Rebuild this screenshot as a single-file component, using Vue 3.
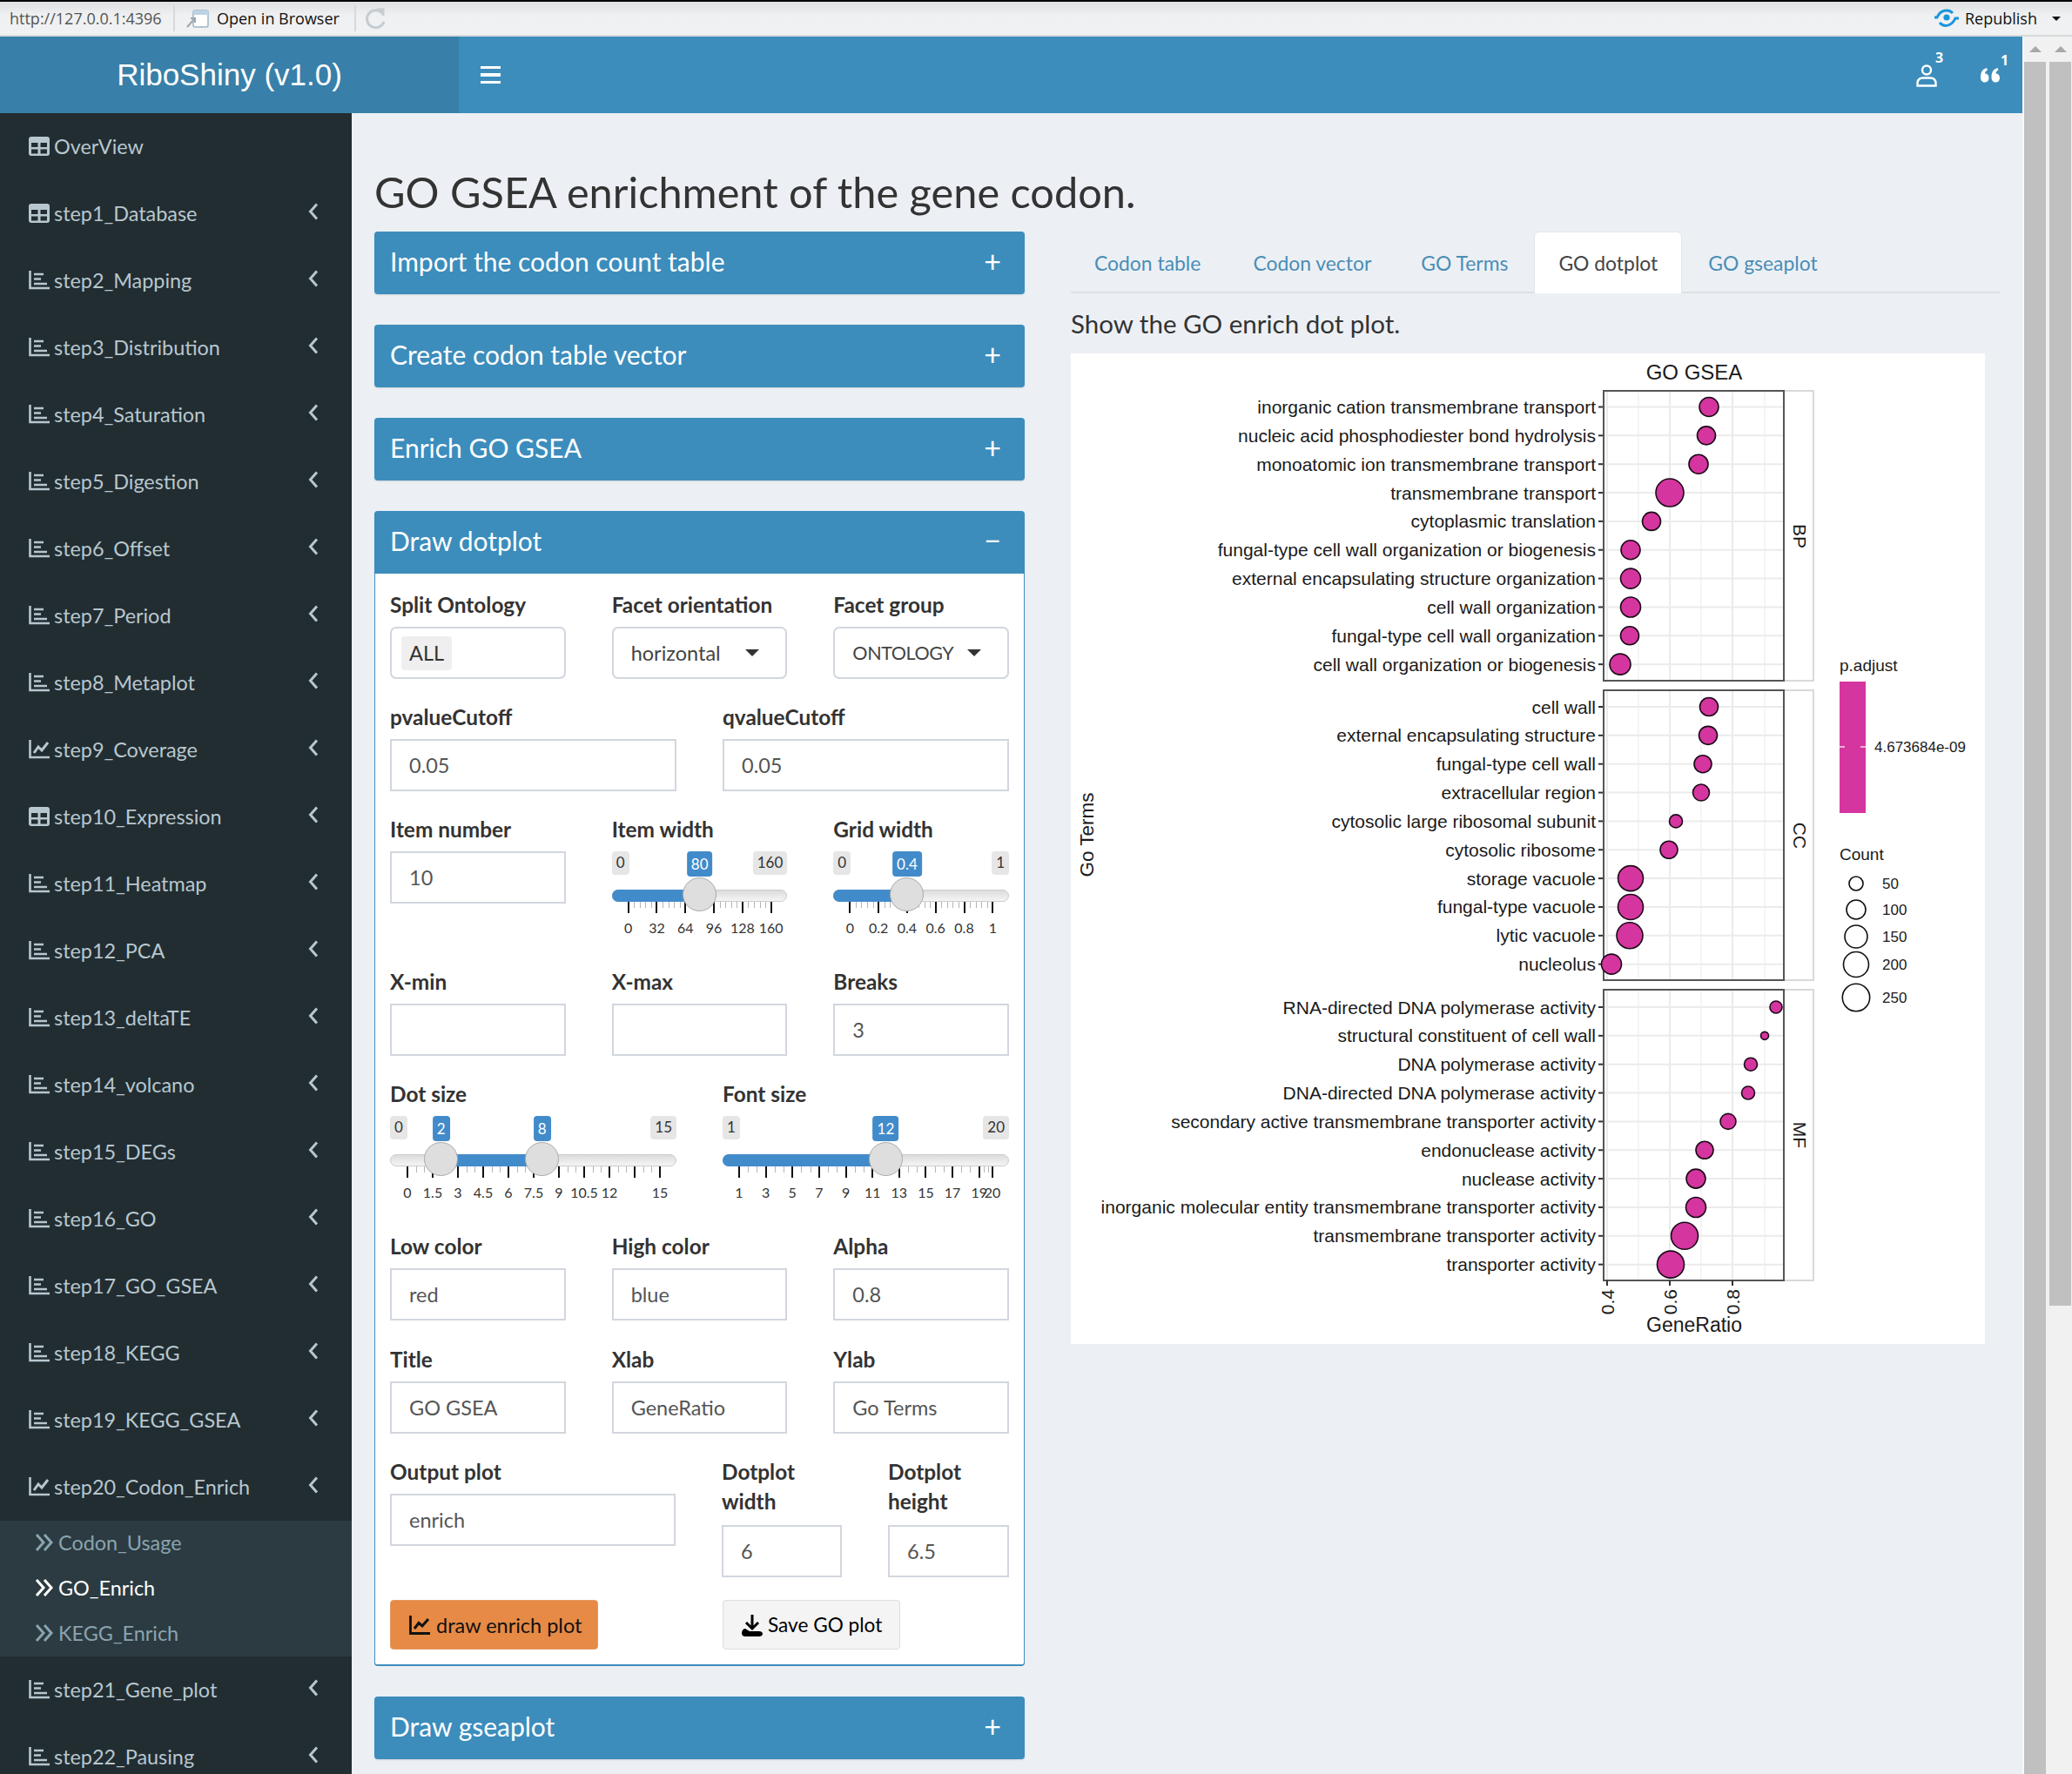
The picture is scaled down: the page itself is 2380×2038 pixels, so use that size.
<script setup>
const navTop = [
  ['OverView', 'table', false],
  ['step1_Database', 'table', true],
  ['step2_Mapping', 'bar', true],
  ['step3_Distribution', 'bar', true],
  ['step4_Saturation', 'bar', true],
  ['step5_Digestion', 'bar', true],
  ['step6_Offset', 'bar', true],
  ['step7_Period', 'bar', true],
  ['step8_Metaplot', 'bar', true],
  ['step9_Coverage', 'line', true],
  ['step10_Expression', 'table', true],
  ['step11_Heatmap', 'bar', true],
  ['step12_PCA', 'bar', true],
  ['step13_deltaTE', 'bar', true],
  ['step14_volcano', 'bar', true],
  ['step15_DEGs', 'bar', true],
  ['step16_GO', 'bar', true],
  ['step17_GO_GSEA', 'bar', true],
  ['step18_KEGG', 'bar', true],
  ['step19_KEGG_GSEA', 'bar', true],
  ['step20_Codon_Enrich', 'line', true]
]
const navBottom = [
  ['step21_Gene_plot', 'bar', true],
  ['step22_Pausing', 'bar', true]
]
const subNav = [
  ['Codon_Usage', false],
  ['GO_Enrich', true],
  ['KEGG_Enrich', false]
]

const tabs = ['Codon table', 'Codon vector', 'GO Terms', 'GO dotplot', 'GO gseaplot']

function evenTicks(min, step, count) {
  return Array.from({ length: count }, (_, i) => {
    const v = +(min + step * i).toFixed(2)
    return { v, label: String(v) }
  })
}

function makeSlider(width, lead, tail, min, max, values, ticks, minors) {
  const span = width - lead - tail
  const pos = (v) => lead + ((v - min) / (max - min)) * span
  const minorTicks = []
  for (let i = 0; i < ticks.length - 1; i++) {
    for (let m = 1; m <= minors; m++) {
      minorTicks.push(pos(ticks[i].v + ((ticks[i + 1].v - ticks[i].v) * m) / (minors + 1)))
    }
  }
  return {
    width,
    min,
    max,
    values,
    single: values.length === 1,
    handles: values.map(pos),
    fillLeft: values.length > 1 ? pos(values[0]) : 0,
    fillWidth: values.length > 1 ? pos(values[1]) - pos(values[0]) : pos(values[0]),
    ticks: ticks.map((t) => ({ ...t, x: pos(t.v) })),
    minorTicks
  }
}

const itemWidth = makeSlider(201, 19, 18, 0, 160, [80], evenTicks(0, 32, 6), 4)
const gridWidth = makeSlider(201, 19, 18, 0, 1, [0.4], evenTicks(0, 0.2, 6), 4)
const dotTicks = evenTicks(0, 1.5, 11).map((t) => (t.v === 13.5 ? { ...t, label: '' } : t))
const dotSize = makeSlider(329, 20, 19, 0, 15, [2, 8], dotTicks, 2)
const fontTicks = [...evenTicks(1, 2, 10), { v: 20, label: '20' }]
const fontSize = makeSlider(329, 19, 19, 1, 20, [12], fontTicks, 2)

const panels = [
  {
    name: 'BP', top: 449, bottom: 782, first: 467.5, strip: 616,
    rows: [
      ['inorganic cation transmembrane transport', 1963, 22],
      ['nucleic acid phosphodiester bond hydrolysis', 1960, 21],
      ['monoatomic ion transmembrane transport', 1951, 22],
      ['transmembrane transport', 1918, 32],
      ['cytoplasmic translation', 1897, 21],
      ['fungal-type cell wall organization or biogenesis', 1873, 22],
      ['external encapsulating structure organization', 1873, 23],
      ['cell wall organization', 1873, 23],
      ['fungal-type cell wall organization', 1872, 21],
      ['cell wall organization or biogenesis', 1861, 24]
    ]
  },
  {
    name: 'CC', top: 793, bottom: 1126, first: 812, strip: 960,
    rows: [
      ['cell wall', 1963, 21],
      ['external encapsulating structure', 1962, 21],
      ['fungal-type cell wall', 1956, 20],
      ['extracellular region', 1954, 19],
      ['cytosolic large ribosomal subunit', 1925, 15],
      ['cytosolic ribosome', 1917, 20],
      ['storage vacuole', 1873, 29],
      ['fungal-type vacuole', 1873, 29],
      ['lytic vacuole', 1872, 30],
      ['nucleolus', 1851, 23]
    ]
  },
  {
    name: 'MF', top: 1137, bottom: 1471, first: 1157, strip: 1304,
    rows: [
      ['RNA-directed DNA polymerase activity', 2040, 14],
      ['structural constituent of cell wall', 2027, 9],
      ['DNA polymerase activity', 2011, 15],
      ['DNA-directed DNA polymerase activity', 2008, 15],
      ['secondary active transmembrane transporter activity', 1985, 18],
      ['endonuclease activity', 1958, 20],
      ['nuclease activity', 1948, 22],
      ['inorganic molecular entity transmembrane transporter activity', 1948, 23],
      ['transmembrane transporter activity', 1935, 31],
      ['transporter activity', 1919, 31]
    ]
  }
]
const gridMajor = [1846, 1918, 1990]
const gridMinor = [1882, 1954, 2027]
const countLegend = [
  [50, 1015, 8],
  [100, 1045, 11],
  [150, 1076, 13],
  [200, 1108, 14.5],
  [250, 1146, 15.7]
]
</script>

<template>
  <div class="page">
    <div class="topbar">
      <span class="url">http://127.0.0.1:4396</span>
      <span class="sep"></span>
      <svg class="open-icon" width="26" height="24" viewBox="0 0 26 24">
        <rect x="8" y="3" width="17" height="19" rx="2" fill="#fff" stroke="#9fb2c4" stroke-width="1.5" />
        <rect x="8" y="3" width="17" height="5" fill="#bcd2e6" />
        <path d="M1 22 L9 13 M5 12 H10 V17" fill="none" stroke="#9aa7b2" stroke-width="2" />
      </svg>
      <span class="open-text">Open in Browser</span>
      <span class="sep sep2"></span>
      <svg class="reload" width="26" height="26" viewBox="0 0 26 26">
        <path d="M20 7 A10 10 0 1 0 22 17 M14 3 H21 V10" fill="none" stroke="#c5ccd2" stroke-width="3" />
      </svg>
      <span class="spacer"></span>
      <svg class="pub-icon" width="30" height="24" viewBox="0 0 30 24">
        <circle cx="15" cy="11" r="3.6" fill="#1a95dd" />
        <path d="M1 11 H4 C8 2 17 1 22 6 M29 12 H25 C21 21 12 23 7 17" fill="none" stroke="#1a95dd" stroke-width="3" />
      </svg>
      <span class="pub-text">Republish</span>
      <span class="pub-caret"></span>
    </div>

    <div class="stage">
      <div class="app">
        <header class="head">
          <div class="logo">RiboShiny (v1.0)</div>
          <div class="burger"><i></i><i></i><i></i></div>
          <span class="spacer"></span>
          <div class="head-icon user">
            <svg width="24" height="27" viewBox="0 0 24 27">
              <circle cx="12" cy="7.5" r="5" fill="none" stroke="#fff" stroke-width="2.4" />
              <path d="M1.5 25.5 V23 C1.5 19 4 16.5 8 16.5 H16 C20 16.5 22.5 19 22.5 23 V25.5 Z" fill="none" stroke="#fff" stroke-width="2.4" />
            </svg>
            <b>3</b>
          </div>
          <div class="head-icon quote">
            <svg width="24" height="17" viewBox="0 0 24 17">
              <path d="M1 11 C1 5 3 1.5 8 0 L9 2.5 C7 3.5 6 5 6 6.5 C9 6.5 10.5 8.5 10.5 11.5 C10.5 14.5 8.5 16.5 5.8 16.5 C3 16.5 1 14.5 1 11 Z" fill="#fff" />
              <path d="M13.5 11 C13.5 5 15.5 1.5 20.5 0 L21.5 2.5 C19.5 3.5 18.5 5 18.5 6.5 C21.5 6.5 23 8.5 23 11.5 C23 14.5 21 16.5 18.3 16.5 C15.5 16.5 13.5 14.5 13.5 11 Z" fill="#fff" />
            </svg>
            <b>1</b>
          </div>
        </header>

        <div class="below">
          <aside class="side">
            <template v-for="n in navTop" :key="n[0]">
              <div class="nav">
                <svg v-if="n[1] === 'table'" class="nav-icon" viewBox="0 0 24 22">
                  <path d="M3 0 H21 A3 3 0 0 1 24 3 V19 A3 3 0 0 1 21 22 H3 A3 3 0 0 1 0 19 V3 A3 3 0 0 1 3 0 Z M3 7 V12 H10.5 V7 Z M13.5 7 V12 H21 V7 Z M3 14.5 V19.5 H10.5 V14.5 Z M13.5 14.5 V19.5 H21 V14.5 Z" fill="#b8c7ce" fill-rule="evenodd" />
                </svg>
                <svg v-else-if="n[1] === 'bar'" class="nav-icon" viewBox="0 0 24 22">
                  <path d="M1.5 0 V20 H24" fill="none" stroke="#b8c7ce" stroke-width="2.6" />
                  <path d="M6 4 H17 M6 9.5 H14 M6 15 H21" fill="none" stroke="#b8c7ce" stroke-width="2.6" />
                </svg>
                <svg v-else class="nav-icon" viewBox="0 0 24 22">
                  <path d="M1.5 0 V20 H24" fill="none" stroke="#b8c7ce" stroke-width="2.6" />
                  <path d="M6 15 L11 8 L15 12 L22 3" fill="none" stroke="#b8c7ce" stroke-width="3" />
                </svg>
                <span>{{ n[0] }}</span>
                <svg v-if="n[2]" class="chev" width="12" height="20" viewBox="0 0 12 20">
                  <path d="M10 1.5 L2.5 10 L10 18.5" fill="none" stroke="#b8c7ce" stroke-width="3" />
                </svg>
              </div>
            </template>
            <div class="subnav">
              <div v-for="s in subNav" :key="s[0]" class="sub" :class="{ on: s[1] }">
                <svg width="22" height="22" viewBox="0 0 22 22">
                  <path d="M2 2 L10 11 L2 20 M11 2 L19 11 L11 20" fill="none" stroke="currentColor" stroke-width="3" />
                </svg>
                <span>{{ s[0] }}</span>
              </div>
            </div>
            <div v-for="n in navBottom" :key="n[0]" class="nav">
              <svg class="nav-icon" viewBox="0 0 24 22">
                <path d="M1.5 0 V20 H24" fill="none" stroke="#b8c7ce" stroke-width="2.6" />
                <path d="M6 4 H17 M6 9.5 H14 M6 15 H21" fill="none" stroke="#b8c7ce" stroke-width="2.6" />
              </svg>
              <span>{{ n[0] }}</span>
              <svg class="chev" width="12" height="20" viewBox="0 0 12 20">
                <path d="M10 1.5 L2.5 10 L10 18.5" fill="none" stroke="#b8c7ce" stroke-width="3" />
              </svg>
            </div>
          </aside>

          <main class="main">
            <h1 class="title">GO GSEA enrichment of the gene codon.</h1>
            <div class="cols">
              <section class="left">
                <div class="box-head"><span>Import the codon count table</span><span class="pm">+</span></div>
                <div class="box-head"><span>Create codon table vector</span><span class="pm">+</span></div>
                <div class="box-head"><span>Enrich GO GSEA</span><span class="pm">+</span></div>

                <div class="box-open">
                  <div class="box-head"><span>Draw dotplot</span><span class="pm minus">−</span></div>
                  <div class="form">
                    <div class="row r3">
                      <div class="field">
                        <label>Split Ontology</label>
                        <div class="ctl round"><span class="chip">ALL</span></div>
                      </div>
                      <div class="field">
                        <label>Facet orientation</label>
                        <div class="ctl round pick">horizontal<i class="caret"></i></div>
                      </div>
                      <div class="field">
                        <label>Facet group</label>
                        <div class="ctl round pick group">ONTOLOGY<i class="caret"></i></div>
                      </div>
                    </div>

                    <div class="row r2">
                      <div class="field"><label>pvalueCutoff</label><div class="ctl">0.05</div></div>
                      <div class="field"><label>qvalueCutoff</label><div class="ctl">0.05</div></div>
                    </div>

                    <div class="row r3">
                      <div class="field"><label>Item number</label><div class="ctl">10</div></div>
                      <div class="field" v-for="sl in [['Item width', itemWidth], ['Grid width', gridWidth]]" :key="sl[0]">
                        <label>{{ sl[0] }}</label>
                        <div class="slider">
                          <span class="end lo">{{ sl[1].min }}</span>
                          <span class="end hi">{{ sl[1].max }}</span>
                          <div class="track"></div>
                          <div class="fill" :class="{ start: sl[1].single }" :style="{ left: sl[1].fillLeft + 'px', width: sl[1].fillWidth + 'px' }"></div>
                          <i v-for="m in sl[1].minorTicks" :key="m" class="minor" :style="{ left: m + 'px' }"></i>
                          <template v-for="t in sl[1].ticks" :key="t.v">
                            <i class="major" :style="{ left: t.x + 'px' }"></i>
                            <span class="tick" :style="{ left: t.x + 'px' }">{{ t.label }}</span>
                          </template>
                          <template v-for="(h, i) in sl[1].handles" :key="i">
                            <span class="val" :style="{ left: h + 'px' }">{{ sl[1].values[i] }}</span>
                            <span class="knob" :style="{ left: h + 'px' }"></span>
                          </template>
                        </div>
                      </div>
                    </div>

                    <div class="row r3">
                      <div class="field"><label>X-min</label><div class="ctl"></div></div>
                      <div class="field"><label>X-max</label><div class="ctl"></div></div>
                      <div class="field"><label>Breaks</label><div class="ctl">3</div></div>
                    </div>

                    <div class="row r2">
                      <div class="field" v-for="sl in [['Dot size', dotSize], ['Font size', fontSize]]" :key="sl[0]">
                        <label>{{ sl[0] }}</label>
                        <div class="slider">
                          <span class="end lo">{{ sl[1].min }}</span>
                          <span class="end hi">{{ sl[1].max }}</span>
                          <div class="track"></div>
                          <div class="fill" :class="{ start: sl[1].single }" :style="{ left: sl[1].fillLeft + 'px', width: sl[1].fillWidth + 'px' }"></div>
                          <i v-for="m in sl[1].minorTicks" :key="m" class="minor" :style="{ left: m + 'px' }"></i>
                          <template v-for="t in sl[1].ticks" :key="t.v">
                            <i class="major" :style="{ left: t.x + 'px' }"></i>
                            <span class="tick" :style="{ left: t.x + 'px' }">{{ t.label }}</span>
                          </template>
                          <template v-for="(h, i) in sl[1].handles" :key="i">
                            <span class="val" :style="{ left: h + 'px' }">{{ sl[1].values[i] }}</span>
                            <span class="knob" :style="{ left: h + 'px' }"></span>
                          </template>
                        </div>
                      </div>
                    </div>

                    <div class="row r3">
                      <div class="field"><label>Low color</label><div class="ctl">red</div></div>
                      <div class="field"><label>High color</label><div class="ctl">blue</div></div>
                      <div class="field"><label>Alpha</label><div class="ctl">0.8</div></div>
                    </div>

                    <div class="row r3 nudge">
                      <div class="field"><label>Title</label><div class="ctl">GO GSEA</div></div>
                      <div class="field"><label>Xlab</label><div class="ctl">GeneRatio</div></div>
                      <div class="field"><label>Ylab</label><div class="ctl">Go Terms</div></div>
                    </div>

                    <div class="row r2">
                      <div class="field"><label>Output plot</label><div class="ctl">enrich</div></div>
                      <div class="row pair">
                        <div class="field"><label>Dotplot<br />width</label><div class="ctl">6</div></div>
                        <div class="field"><label>Dotplot<br />height</label><div class="ctl">6.5</div></div>
                      </div>
                    </div>

                    <div class="row r2 actions">
                      <div>
                        <button class="btn draw">
                          <svg width="24" height="24" viewBox="0 0 24 24">
                            <path d="M1.5 1 V21.5 H24" fill="none" stroke="#111" stroke-width="2.8" />
                            <path d="M6 16 L11 9.5 L15 13 L22 5" fill="none" stroke="#111" stroke-width="3" />
                          </svg>
                          <span>draw enrich plot</span>
                        </button>
                      </div>
                      <div>
                        <button class="btn save">
                          <svg width="24" height="26" viewBox="0 0 24 26">
                            <path d="M12 1 V15 M5 10 L12 17 L19 10" fill="none" stroke="#000" stroke-width="3" />
                            <path d="M0 22 C0 19 2 17 4 17 L9 20 H20 C22 20 24 21 24 23 C24 25 22 26 20 26 H4 C2 26 0 25 0 22 Z" fill="#000" />
                          </svg>
                          <span>Save GO plot</span>
                        </button>
                      </div>
                    </div>
                  </div>
                </div>

                <div class="box-head"><span>Draw gseaplot</span><span class="pm">+</span></div>
              </section>

              <section class="right">
                <div class="tabs">
                  <div v-for="t in tabs" :key="t" class="tab" :class="{ active: t === 'GO dotplot' }">{{ t }}</div>
                </div>
                <h4 class="show">Show the GO enrich dot plot.</h4>
                <svg class="plot" width="1050" height="1138" viewBox="1230 406 1050 1138">
                  <text x="1946" y="427" class="t" font-size="24" text-anchor="middle" dominant-baseline="central">GO GSEA</text>
                  <text class="t" font-size="22.5" text-anchor="middle" dominant-baseline="central" transform="translate(1248 959) rotate(-90)">Go Terms</text>

                  <g v-for="p in panels" :key="p.name">
                    <rect x="2049" :y="p.top" width="34" :height="p.bottom - p.top" fill="#fff" stroke="#d9d9d9" stroke-width="2" />
                    <line v-for="g in gridMinor" :key="g" :x1="g" :x2="g" :y1="p.top" :y2="p.bottom" stroke="#f2f2f2" stroke-width="1.5" />
                    <line v-for="g in gridMajor" :key="g" :x1="g" :x2="g" :y1="p.top" :y2="p.bottom" stroke="#ebebeb" stroke-width="2" />
                    <g v-for="(r, i) in p.rows" :key="r[0]">
                      <line x1="1842" x2="2049" :y1="p.first + i * 32.85" :y2="p.first + i * 32.85" stroke="#ebebeb" stroke-width="2" />
                      <line x1="1836" x2="1842" :y1="p.first + i * 32.85" :y2="p.first + i * 32.85" stroke="#333" stroke-width="2" />
                      <text x="1833" :y="p.first + i * 32.85" class="t" font-size="21" text-anchor="end" dominant-baseline="central">{{ r[0] }}</text>
                    </g>
                    <rect x="1842" :y="p.top" width="207" :height="p.bottom - p.top" fill="none" stroke="#555" stroke-width="2" />
                    <text class="t" font-size="21" text-anchor="middle" dominant-baseline="central" :transform="`translate(2067 ${p.strip}) rotate(90)`">{{ p.name }}</text>
                    <circle v-for="(r, i) in p.rows" :key="r[0]" :cx="r[1]" :cy="p.first + i * 32.85" :r="r[2] / 2" fill="#d5359f" stroke="#1c0a18" stroke-width="1.6" />
                  </g>

                  <g v-for="(x, i) in gridMajor" :key="x">
                    <line :x1="x" :x2="x" y1="1471" y2="1477" stroke="#333" stroke-width="2" />
                    <text class="t" font-size="21" text-anchor="end" dominant-baseline="central" :transform="`translate(${x} 1481) rotate(-90)`">{{ ['0.4', '0.6', '0.8'][i] }}</text>
                  </g>
                  <text x="1946" y="1522" class="t" font-size="23" text-anchor="middle" dominant-baseline="central">GeneRatio</text>

                  <text x="2113" y="764" class="t" font-size="19" dominant-baseline="central">p.adjust</text>
                  <rect x="2113" y="783" width="30" height="151" fill="#d5359f" />
                  <path d="M2113 858 H2119 M2137 858 H2143" stroke="#f5d6ea" stroke-width="1.5" />
                  <text x="2153" y="858" class="t" font-size="17" dominant-baseline="central">4.673684e-09</text>

                  <text x="2113" y="981" class="t" font-size="19" dominant-baseline="central">Count</text>
                  <g v-for="c in countLegend" :key="c[0]">
                    <circle cx="2132" :cy="c[1]" :r="c[2]" fill="#fff" stroke="#111" stroke-width="1.6" />
                    <text x="2162" :y="c[1]" class="t" font-size="17" dominant-baseline="central">{{ c[0] }}</text>
                  </g>
                </svg>
              </section>
            </div>
          </main>
        </div>
      </div>

      <div class="scrolls">
        <div class="sb">
          <div class="arrow"></div>
          <div class="thumb long"></div>
        </div>
        <div class="sb">
          <div class="arrow"></div>
          <div class="thumb short"></div>
        </div>
      </div>
    </div>
  </div>
</template>

<style>
html, body {
  margin: 0;
  background: #ecf0f5;
}
</style>

<style scoped>
.page {
  width: 2380px;
  height: 2038px;
  overflow: hidden;
  display: flex;
  flex-direction: column;
  font-family: Lato, "Noto Sans", sans-serif;
  color: #333;
}

.topbar {
  height: 42px;
  flex: none;
  display: flex;
  align-items: center;
  box-sizing: border-box;
  border-top: 2px solid #000;
  border-bottom: 2px solid #d8dadc;
  background: linear-gradient(#dfe0e2, #eef0f1 40%, #f1f2f3);
  font-family: "Open Sans", sans-serif;
  padding-left: 11px;
  padding-right: 13px;
}
.url {
  width: 178px;
  color: #555;
  font-size: 18px;
  white-space: nowrap;
}
.sep {
  width: 2px;
  height: 30px;
  background: #d6d8da;
  margin-left: 10px;
}
.open-icon {
  margin-left: 13px;
}
.open-text {
  margin-left: 9px;
  color: #111;
  font-size: 18px;
  width: 141px;
  white-space: nowrap;
}
.sep2 {
  margin-left: 17px;
}
.reload {
  margin-left: 10px;
}
.spacer {
  flex: 1;
}
.pub-text {
  margin-left: 6px;
  color: #111;
  font-size: 18px;
}
.pub-caret {
  margin-left: 17px;
  border-left: 5px solid transparent;
  border-right: 5px solid transparent;
  border-top: 5px solid #111;
}

.stage {
  flex: 1;
  display: flex;
  min-height: 0;
}
.app {
  width: 2323px;
  flex: none;
  display: flex;
  flex-direction: column;
}

.head {
  height: 88px;
  flex: none;
  display: flex;
  align-items: center;
  background: #3c8dbc;
  color: #fff;
}
.logo {
  width: 527px;
  height: 100%;
  display: flex;
  align-items: center;
  justify-content: center;
  background: #3880a9;
  font-family: "Liberation Sans", sans-serif;
  font-size: 35px;
}
.burger {
  margin-left: 25px;
  width: 23px;
  display: flex;
  flex-direction: column;
  gap: 5px;
}
.burger i {
  display: block;
  height: 3.5px;
  background: #fff;
}
.head-icon {
  position: relative;
  display: flex;
}
.head-icon b {
  position: absolute;
  font-size: 16px;
  color: #fff;
  font-family: "Open Sans", sans-serif;
}
.user {
  margin-right: 49px;
}
.user b {
  left: 22px;
  top: -18px;
}
.quote {
  margin-right: 25px;
}
.quote b {
  left: 24px;
  top: -20px;
}

.below {
  flex: 1;
  display: flex;
  min-height: 0;
}
.side {
  width: 404px;
  flex: none;
  background: #222d32;
  color: #b8c7ce;
  font-size: 23.4px;
  overflow: hidden;
}
.nav {
  height: 77px;
  box-sizing: border-box;
  display: flex;
  align-items: center;
  padding: 0 38px 2px 33px;
}
.nav-icon {
  width: 24px;
  height: 22px;
  margin-right: 5px;
  flex: none;
}
.chev {
  margin-left: auto;
  margin-top: -3px;
}
.subnav {
  height: 156px;
  background: #2c3b41;
}
.sub {
  height: 52px;
  box-sizing: border-box;
  display: flex;
  align-items: center;
  padding: 0 0 2px 40px;
  gap: 5px;
  color: #8aa4af;
}
.sub.on {
  color: #fff;
}

.main {
  flex: 1;
  min-width: 0;
  background: #ecf0f5;
  padding: 60px 26px 0 26px;
}
.title {
  margin: 0 0 16px;
  height: 60px;
  line-height: 60px;
  font-size: 48.7px;
  font-weight: 400;
  color: #333;
  white-space: nowrap;
}
.cols {
  display: flex;
  gap: 53px;
}
.left {
  width: 747px;
  flex: none;
  display: flex;
  flex-direction: column;
  gap: 35px;
}
.right {
  flex: 1;
  min-width: 0;
}

.box-head {
  height: 72px;
  box-sizing: border-box;
  background: #3c8dbc;
  color: #fff;
  border-radius: 4px;
  display: flex;
  align-items: center;
  justify-content: space-between;
  padding: 0 27px 5px 18px;
  font-size: 30px;
  box-shadow: 0 1px 2px rgba(0, 0, 0, 0.12);
}
.pm {
  font-size: 34px;
  line-height: 1;
}
.box-open .box-head {
  border-radius: 4px 4px 0 0;
}
.form {
  box-sizing: border-box;
  height: 1255px;
  background: #fff;
  border: 1px solid #3c8dbc;
  border-top: 0;
  border-bottom-width: 2px;
  border-radius: 0 0 4px 4px;
  padding: 19px 17px 0;
  display: flex;
  flex-direction: column;
  gap: 27px;
}
.row {
  display: grid;
  column-gap: 53px;
}
.r3 {
  grid-template-columns: repeat(3, 1fr);
}
.r2 {
  grid-template-columns: repeat(2, 1fr);
}
.pair {
  grid-template-columns: 138px 139px;
}
.pair label {
  line-height: 34px;
  margin-bottom: 10px;
}
.nudge {
  margin-top: 1px;
}
.actions {
  margin-top: -1px;
}
.field {
  display: flex;
  flex-direction: column;
  min-width: 0;
}
label {
  display: block;
  font-weight: 700;
  font-size: 24.4px;
  line-height: 33px;
  margin-bottom: 9px;
  color: #333;
  white-space: nowrap;
}
.ctl {
  box-sizing: border-box;
  height: 60px;
  display: flex;
  align-items: center;
  border: 2px solid #d2d6de;
  padding-left: 20px;
  font-size: 23.5px;
  color: #555;
  background: #fff;
}
.round {
  border-radius: 7px;
  position: relative;
}
.pick {
  color: #444;
}
.group {
  font-size: 21.5px;
  letter-spacing: -0.4px;
}
.chip {
  margin-left: -9px;
  height: 39px;
  padding: 0 9px;
  display: flex;
  align-items: center;
  background: #efefef;
  border-radius: 4px;
  color: #333;
}
.caret {
  position: absolute;
  right: 30px;
  top: 24px;
  border-left: 8px solid transparent;
  border-right: 8px solid transparent;
  border-top: 8px solid #333;
}

.slider {
  position: relative;
  height: 106px;
  font-size: 17px;
}
.end,
.val {
  position: absolute;
  top: 0;
  height: 27px;
  line-height: 26px;
  padding: 0 5px;
  border-radius: 4px;
  background: #e6e6e6;
  color: #333;
}
.lo {
  left: 0;
}
.hi {
  right: 0;
}
.val {
  height: 29px;
  line-height: 29px;
  background: #428bca;
  color: #fff;
  transform: translateX(-50%);
}
.track {
  position: absolute;
  left: 0;
  right: 0;
  top: 44px;
  height: 14px;
  box-sizing: border-box;
  border: 1px solid #ccc;
  border-radius: 7px;
  background: linear-gradient(#dcdcdc, #f5f5f5);
}
.fill {
  position: absolute;
  top: 44px;
  height: 14px;
  background: #428bca;
}
.fill.start {
  border-radius: 7px 0 0 7px;
}
.knob {
  position: absolute;
  top: 30px;
  width: 39px;
  height: 39px;
  box-sizing: border-box;
  margin-left: -19.5px;
  border-radius: 50%;
  background: #dedede;
  border: 1px solid #aaa;
}
.major {
  position: absolute;
  top: 58px;
  width: 2px;
  height: 13px;
  margin-left: -1px;
  background: #111;
}
.minor {
  position: absolute;
  top: 58px;
  width: 1px;
  height: 7px;
  background: #b5b5b5;
}
.tick {
  position: absolute;
  top: 78px;
  line-height: 20px;
  font-size: 16px;
  color: #333;
  transform: translateX(-50%);
  white-space: nowrap;
}

.btn {
  height: 57px;
  box-sizing: border-box;
  display: inline-flex;
  align-items: center;
  gap: 7px;
  border-radius: 4px;
  font: inherit;
  font-size: 23.5px;
  white-space: nowrap;
  padding: 0 0 0 21px;
  color: #111;
}
.draw {
  width: 239px;
  background: #e68a45;
  border: 1px solid #e59a60;
}
.save {
  width: 204px;
  background: #f4f4f4;
  border: 1px solid #ddd;
  color: #000;
  gap: 6px;
  font-size: 22.6px;
}

.tabs {
  height: 71px;
  display: flex;
  box-sizing: border-box;
  border-bottom: 2px solid #dde1e6;
  gap: 3px;
}
.tab {
  height: 71px;
  box-sizing: border-box;
  padding: 0 27px;
  display: flex;
  align-items: center;
  font-size: 22.9px;
  color: #4b8db5;
  border-radius: 6px 6px 0 0;
}
.tab:first-child {
  margin-right: 3px;
}
.tab.active {
  background: #fff;
  color: #444;
  border: 1px solid #e4e7eb;
  border-bottom: 0;
}
.show {
  margin: 0;
  height: 69px;
  display: flex;
  align-items: center;
  font-size: 29.5px;
  font-weight: 400;
  color: #333;
}
.plot {
  display: block;
  background: #fff;
}
.t {
  font-family: "Liberation Sans", sans-serif;
  fill: #1a1a1a;
}

.scrolls {
  flex: 1;
  display: flex;
  justify-content: flex-end;
  gap: 4px;
  background: #f1f1f1;
  padding-right: 1px;
  border-left: 2px solid #f8f8f8;
}
.sb {
  width: 25px;
  display: flex;
  flex-direction: column;
  align-items: stretch;
}
.arrow {
  height: 29px;
  flex: none;
  position: relative;
}
.arrow::after {
  content: "";
  position: absolute;
  left: 6px;
  top: 11px;
  border-left: 7px solid transparent;
  border-right: 7px solid transparent;
  border-bottom: 7px solid #a8a8a8;
}
.thumb {
  background: #c0c0c0;
}
.long {
  flex: 1;
}
.short {
  height: 1429px;
}
</style>
